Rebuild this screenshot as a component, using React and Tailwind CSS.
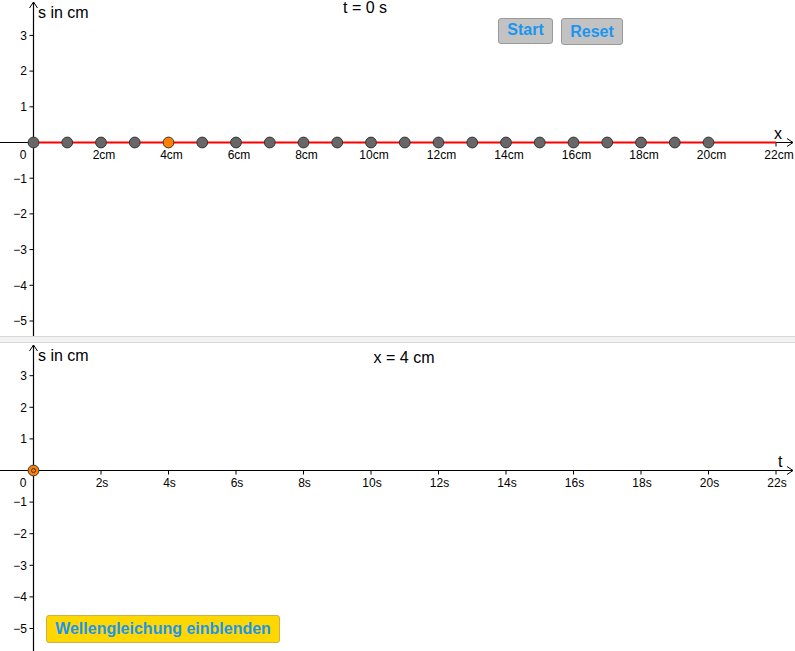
import React from "react";

const UX = 33.75;
const OX = 33.5;
const W = 795;

function Arrow({ x, y, dir }) {
  if (dir === "up") {
    return <path d={`M${x - 4} ${y + 6} L${x} ${y} L${x + 4} ${y + 6}`} fill="none" stroke="#000" strokeWidth="1" />;
  }
  return <path d={`M${x - 6} ${y - 4} L${x} ${y} L${x - 6} ${y + 4}`} fill="none" stroke="#000" strokeWidth="1" />;
}

function Axes({ height, oy, uy, yTop, unit, axisLetter, yticks, labelOffset }) {
  const xticks = [];
  for (let i = 2; i <= 22; i += 2) xticks.push(i);
  return (
    <g fontFamily="'Liberation Sans', Arial, sans-serif" fill="#000">
      <line x1="0" y1={oy} x2={W - 2} y2={oy} stroke="#000" strokeWidth="1.2" />
      <Arrow x={W - 2} y={oy} dir="right" />
      <line x1={OX} y1={yTop} x2={OX} y2={height} stroke="#000" strokeWidth="1.2" />
      <Arrow x={OX} y={yTop} dir="up" />
      {xticks.map((t) => (
        <g key={t}>
          <line x1={OX + t * UX} y1={oy} x2={OX + t * UX} y2={oy + 4} stroke="#000" strokeWidth="1" />
          <text x={OX + t * UX + labelOffset} y={oy + 16} fontSize="12" textAnchor="middle">
            {t}
            {unit}
          </text>
        </g>
      ))}
      <text x="23" y={oy + 16} fontSize="12" textAnchor="middle">0</text>
      {yticks.map((v) => (
        <g key={v}>
          <line x1={OX - 4} y1={oy - v * uy} x2={OX} y2={oy - v * uy} stroke="#000" strokeWidth="1" />
          <text x="27" y={oy - v * uy + 4.3} fontSize="12" textAnchor="end">
            {v < 0 ? "\u2212" + Math.abs(v) : v}
          </text>
        </g>
      ))}
      <text x="38" y={yTop + 16} fontSize="16">s in cm</text>
      <text x={axisLetter === "x" ? 774 : 778} y={oy - 4} fontSize="16">{axisLetter}</text>
    </g>
  );
}

function TopPanel() {
  const oy = 142.5;
  const uy = 35.7;
  const pts = [];
  for (let i = 0; i <= 20; i++) pts.push(i);
  return (
    <div className="relative h-[336px] w-full bg-white">
      <svg width={W} height="336" className="block">
        <Axes height={336} oy={oy} uy={uy} yTop={2} unit="cm" axisLetter="x" labelOffset={3} yticks={[3, 2, 1, -1, -2, -3, -4, -5]} />
        <line x1={OX} y1={oy} x2={OX + 22 * UX} y2={oy} stroke="#ff0000" strokeWidth="2" />
        {pts.map((i) => (
          <circle
            key={i}
            cx={OX + i * UX}
            cy={oy}
            r="5.4"
            fill={i === 4 ? "#ff7f00" : "#676767"}
            stroke="#333"
            strokeWidth="1"
          />
        ))}
        <text x="365" y="13" fontSize="16" textAnchor="middle" fontFamily="'Liberation Sans', Arial, sans-serif">
          t = 0 s
        </text>
      </svg>
      <button className="absolute left-[498px] top-[18px] flex h-[26px] w-[55px] items-center justify-center rounded-[3px] border border-[#9a9a9a] bg-[#c2c2c2] pb-[2px] text-[16px] font-bold text-[#1a96f0] [font-family:'Liberation_Sans',Arial,sans-serif]">
        Start
      </button>
      <button className="absolute left-[561px] top-[18px] flex h-[27px] w-[62px] items-center justify-center rounded-[3px] border border-[#9a9a9a] bg-[#c2c2c2] pt-[1px] text-[16px] font-bold text-[#1a96f0] [font-family:'Liberation_Sans',Arial,sans-serif]">
        Reset
      </button>
    </div>
  );
}

function BottomPanel() {
  const oy = 127.5;
  const uy = 31.6;
  return (
    <div className="relative h-[308px] w-full bg-white">
      <svg width={W} height="308" className="block">
        <Axes height={308} oy={oy} uy={uy} yTop={2} unit="s" axisLetter="t" labelOffset={1} yticks={[3, 2, 1, -1, -2, -3, -4, -5]} />
        <circle cx={OX} cy={oy} r="5.4" fill="#ff7f00" stroke="#333" strokeWidth="1" />
        <circle cx={OX} cy={oy} r="2" fill="none" stroke="#333" strokeWidth="1" />
        <text x="404" y="20" fontSize="16" textAnchor="middle" fontFamily="'Liberation Sans', Arial, sans-serif">
          x = 4 cm
        </text>
      </svg>
      <button className="absolute left-[46px] top-[272px] flex h-[28px] w-[234px] items-center justify-center rounded-[3px] border border-[#d0b040] bg-[#ffd700] text-[16px] font-bold text-[#1a96f0] [font-family:'Liberation_Sans',Arial,sans-serif]">
        Wellengleichung einblenden
      </button>
    </div>
  );
}

export default function App() {
  return (
    <div className="flex h-[651px] w-[795px] flex-col overflow-hidden bg-white">
      <TopPanel />
      <div className="h-[7px] w-full border-y border-[#d8d8d8] bg-[#f2f2f2]" />
      <BottomPanel />
    </div>
  );
}
